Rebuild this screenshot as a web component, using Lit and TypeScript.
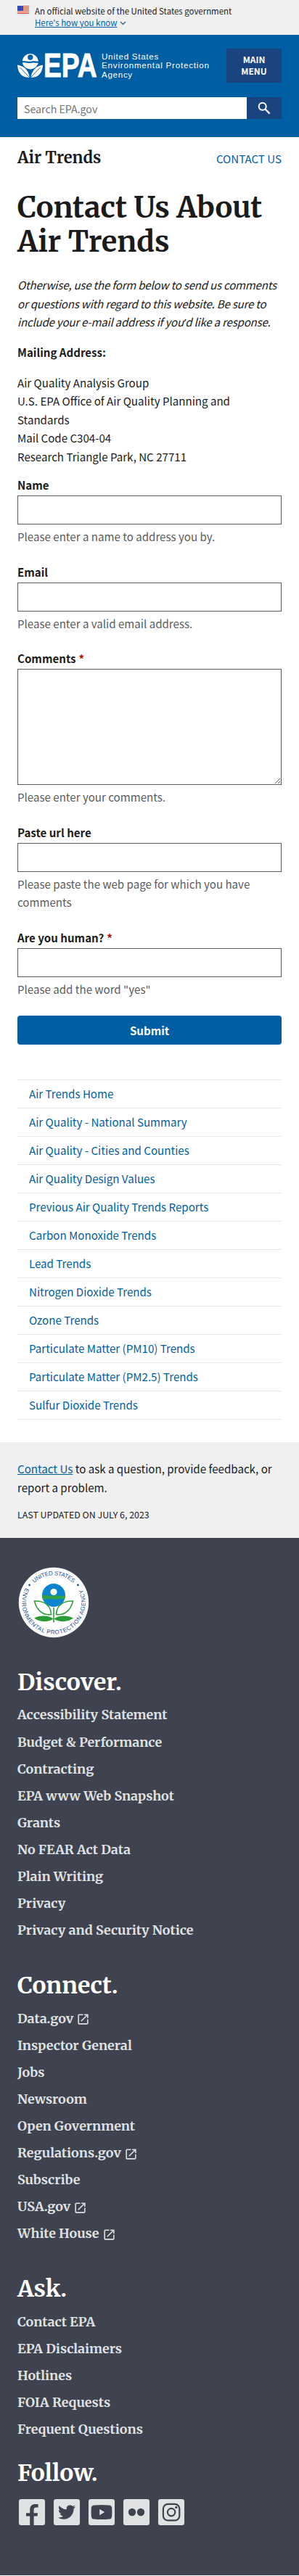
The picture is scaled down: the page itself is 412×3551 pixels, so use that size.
import { LitElement, html, svg, css, nothing } from "lit";
import { customElement } from "lit/decorators.js";

interface Field { id: string; label: string; hint: string; required?: boolean; multiline?: boolean; }
interface FooterLink { text: string; external?: boolean; }

const FIELDS: Field[] = [
  { id: "name", label: "Name", hint: "Please enter a name to address you by." },
  { id: "email", label: "Email", hint: "Please enter a valid email address." },
  { id: "comments", label: "Comments", hint: "Please enter your comments.", required: true, multiline: true },
  { id: "url", label: "Paste url here", hint: "Please paste the web page for which you have comments" },
  { id: "human", label: "Are you human?", hint: 'Please add the word "yes"', required: true },
];

const NAV = [
  "Air Trends Home", "Air Quality - National Summary", "Air Quality - Cities and Counties",
  "Air Quality Design Values", "Previous Air Quality Trends Reports", "Carbon Monoxide Trends",
  "Lead Trends", "Nitrogen Dioxide Trends", "Ozone Trends", "Particulate Matter (PM10) Trends",
  "Particulate Matter (PM2.5) Trends", "Sulfur Dioxide Trends",
];

const DISCOVER: FooterLink[] = [
  "Accessibility Statement", "Budget & Performance", "Contracting", "EPA www Web Snapshot", "Grants",
  "No FEAR Act Data", "Plain Writing", "Privacy", "Privacy and Security Notice",
].map((text) => ({ text }));

const CONNECT: FooterLink[] = [
  { text: "Data.gov", external: true }, { text: "Inspector General" }, { text: "Jobs" }, { text: "Newsroom" },
  { text: "Open Government" }, { text: "Regulations.gov", external: true }, { text: "Subscribe" },
  { text: "USA.gov", external: true }, { text: "White House", external: true },
];

const ASK: FooterLink[] = [
  "Contact EPA", "EPA Disclaimers", "Hotlines", "FOIA Requests", "Frequent Questions",
].map((text) => ({ text }));

const SOCIAL = [
  { name: "Facebook", art: svg`<path fill="#3e434f" d="M15.2 36V23.4H10V19.2H15.2V14.8C15.2 9.6 18 7 22.6 7H26.6V11.4H23.8C21.2 11.4 20.6 12.6 20.6 14.6V19.2H26L25.5 23.4H20.6V36Z"/>` },
  { name: "Twitter", art: svg`<path fill="#3e434f" transform="translate(6 6)" d="M23.953 4.57a10 10 0 01-2.825.775 4.958 4.958 0 002.163-2.723c-.951.555-2.005.959-3.127 1.184a4.92 4.92 0 00-8.384 4.482C7.69 8.095 4.067 6.13 1.64 3.162a4.822 4.822 0 00-.666 2.475c0 1.71.87 3.213 2.188 4.096a4.904 4.904 0 01-2.228-.616v.06a4.923 4.923 0 003.946 4.827 4.996 4.996 0 01-2.212.085 4.936 4.936 0 004.604 3.417 9.867 9.867 0 01-6.102 2.105c-.39 0-.779-.023-1.17-.067a13.995 13.995 0 007.557 2.209c9.053 0 13.998-7.496 13.998-13.985 0-.21 0-.42-.015-.63A9.935 9.935 0 0024 4.59z"/>` },
  { name: "YouTube", art: svg`<path fill="#3e434f" d="M7 8.5Q18 7.4 29 8.5Q31.8 8.8 32.1 11.5Q32.8 18 32.1 24.5Q31.8 27.2 29 27.5Q18 28.6 7 27.5Q4.2 27.2 3.9 24.5Q3.2 18 3.9 11.5Q4.2 8.8 7 8.5Z"/><path fill="#dfe1e2" d="M15.2 13.8 22.2 18 15.2 22.2Z"/>` },
  { name: "Flickr", art: svg`<circle cx="12" cy="18" r="5.2" fill="#3e434f"/><circle cx="24" cy="18" r="5.2" fill="#3e434f"/>` },
  { name: "Instagram", art: svg`<g fill="none" stroke="#3e434f" stroke-width="2.2"><rect x="6.9" y="6.9" width="22.4" height="22.4" rx="6.4"/><circle cx="18.1" cy="18.1" r="5.2"/></g><circle cx="24.8" cy="11.4" r="1.6" fill="#3e434f"/>` },
];

@customElement("us-banner")
class UsBanner extends LitElement {
  static styles = css`
    :host { display: flex; align-items: flex-start; gap: 8px; height: 48px; padding: 7px 24px 0; box-sizing: border-box;
      background: #f0f0f0; color: #1b1b1b; font: 11.45px/16px "Noto Sans CJK SC", "Open Sans", sans-serif; }
    .flag { margin-top: 1px; display: block; }
    .text { margin: 0; white-space: nowrap; }
    .link { color: #005ea2; text-decoration: underline; }
    .chev { margin-left: 4px; vertical-align: 1px; }
  `;
  render() {
    return html`
      <svg class="flag" width="16" height="11" viewBox="0 0 16 11">
        <rect width="16" height="11" fill="#fff"/>
        ${[0, 1, 2, 3, 4, 5].map((i) => svg`<rect y=${i * 2} width="16" height="1" fill="#db3e1f"/>`)}
        <rect width="8" height="7" fill="#1e33b1"/>
        ${[1, 3, 5].map((y) => [1, 3, 5, 6.6].map((x) => svg`<circle cx=${x + 0.2} cy=${y + 0.4} r=".45" fill="#fff"/>`))}
      </svg>
      <p class="text">An official website of the United States government<br>
        <a class="link">Here's how you know</a><svg class="chev" width="9" height="6" viewBox="0 0 9 6"><path d="M1 1 4.5 4.5 8 1" fill="none" stroke="#3f6079" stroke-width="1.4"/></svg>
      </p>`;
  }
}

@customElement("site-header")
class SiteHeader extends LitElement {
  static styles = css`
    :host { display: block; height: 141px; box-sizing: border-box; padding: 19px 24px 0; background: #005ea2;
      font-family: "Noto Sans CJK SC", "Open Sans", sans-serif; }
    .top { display: flex; justify-content: space-between; align-items: flex-start; height: 47px; }
    .logo { display: block; margin-top: -7px; }
    .menu { width: 76px; height: 47px; margin: 0; padding: 0 16px 1px; border: 0; background: #1a4480; color: #fff;
      font: 700 11.9px/16px "Noto Sans CJK SC", "Open Sans", sans-serif; }
    .search { display: flex; margin-top: 20px; height: 30px; }
    .input { flex: 1; min-width: 0; height: 30px; box-sizing: border-box; border: 0; border-radius: 0; margin: 0; padding: 2px 9px 0;
      background: #fff; font: 14.2px/20px "Noto Sans CJK SC", "Open Sans", sans-serif; }
    .input::placeholder { color: #757575; opacity: 1; }
    .go { width: 48px; padding: 0; border: 0; background: #1a4480; display: grid; place-items: center; }
  `;
  render() {
    return html`
      <div class="top">
        <svg class="logo" width="268" height="60" viewBox="24 60 268 60" fill="#fff">
          <path d="M30.6 84.2A11.2 11.2 0 0 1 52.9 84.2C50 85.4 47 83.2 43.8 84.4 40 85.8 35 83.2 30.6 84.2Z"/>
          <circle cx="41.8" cy="79" r="3.7" fill="#005ea2"/>
          <path d="M30.8 86.6C35 85.4 39.5 88 43.6 86.8 47 85.8 50 87.4 52.7 86.6A11.2 11.2 0 0 1 30.8 86.6Z"/>
          <path d="M24 89.4C32.5 90.6 38.8 95.6 40.9 106.7 31 107.4 24.4 101 24 89.4Z"/>
          <path d="M59 89.4C50.5 90.6 44.6 95.6 42.3 106.7 52 107.4 58.6 101 59 89.4Z"/>
          <path d="M27.5 93 41 107M55.5 93 42 107" stroke="#005ea2" stroke-width=".9"/>
          <text transform="translate(60 106.3) scale(.8 1)" stroke="#fff" stroke-width=".9" font-family="Liberation Sans, Arial, sans-serif" font-weight="700" font-size="46.5">EPA</text>
          <g font-family="Liberation Sans, Arial, sans-serif" font-size="11.6">
            <text x="140" y="82" letter-spacing=".72">United States</text>
            <text x="140" y="94.3" letter-spacing=".8">Environmental Protection</text>
            <text x="140" y="106.8" letter-spacing=".7">Agency</text>
          </g>
        </svg>
        <button class="menu">MAIN MENU</button>
      </div>
      <div class="search">
        <input class="input" type="text" placeholder="Search EPA.gov" aria-label="Search">
        <button class="go" aria-label="Search"><svg width="18" height="18" viewBox="0 0 18 18"><g fill="none" stroke="#fff"><circle cx="6.7" cy="6.7" r="5" stroke-width="2"/><path d="M10.5 10.5 16.6 16.6" stroke-width="2.4"/></g></svg></button>
      </div>`;
  }
}

@customElement("form-field")
class FormField extends LitElement {
  static properties = { field: { attribute: false } };
  declare field: Field;
  static styles = css`
    :host { display: block; margin-bottom: 24px; }
    .label { display: block; font-weight: 700; line-height: 22.05px; margin-bottom: 4px; }
    .star { color: #b50909; margin-left: 4px; }
    .control { display: block; box-sizing: border-box; width: 100%; height: 40px; margin: 0; padding: 8px;
      border: 1px solid #565c65; border-radius: 0; background: #fff; font: inherit; line-height: 1.3; }
    .multi { height: 160px; }
    .hint { margin-top: 4px; color: #5c5c5c; }
  `;
  render() {
    const f = this.field;
    return html`
      <label class="label" for=${f.id}>${f.label}${f.required ? html`<span class="star">*</span>` : nothing}</label>
      ${f.multiline
        ? html`<textarea class="control multi" id=${f.id}></textarea>`
        : html`<input class="control" id=${f.id} type="text">`}
      <div class="hint">${f.hint}</div>`;
  }
}

@customElement("epa-seal")
class EpaSeal extends LitElement {
  static styles = css`:host { display: block; } .seal { display: block; }`;
  render() {
    return html`
      <svg class="seal" width="100" height="100" viewBox="-50 -50 100 100">
        <defs>
          <path id="top" d="M-26.7 -26.7A37.8 37.8 0 0 1 26.7 -26.7"/>
          <path id="low" d="M-38.8 -19.8A43.6 43.6 0 1 0 38.8 -19.8"/>
        </defs>
        <circle r="48.2" fill="#fff"/>
        <g fill="#1b4f8f" font-family="Liberation Sans, Arial, sans-serif" font-size="8">
          <text textLength="59"><textPath href="#top">UNITED STATES</textPath></text>
          <text textLength="176"><textPath href="#low">ENVIRONMENTAL PROTECTION AGENCY</textPath></text>
          <circle cx="-33.4" cy="-24" r="1.4"/><circle cx="33.4" cy="-24" r="1.4"/>
        </g>
        <circle cy="-10" r="16" fill="#0a84d0"/>
        <circle cy="-14.5" r="4.6" fill="#fff"/>
        <path d="M-16 -9.6C-10 -10.8 -5 -8.4 0 -9.4 5 -10.4 10 -8.4 16 -9.6L15.2 -4.6C10 -6.4 5 -3.4 0 -4.6 -5 -5.8 -10 -3.6 -15.2 -4.6Z" fill="#2fa043"/>
        <g fill="none" stroke="#2a9c36" stroke-width="1.5">
          <path d="M-26.5 -2C-13 -2.6 -4 4 -3.4 16.5 -16 18.5 -24 9 -26.5 -2Z"/>
          <path d="M26.5 -2C13 -2.6 4 4 3.4 16.5 16 18.5 24 9 26.5 -2Z"/>
        </g>
        <path d="M-27 21.5C-19 17 -6 17.5 -.5 22.5 -8 28 -20 27 -27 21.5ZM27 21.5C19 17 6 17.5 .5 22.5 8 28 20 27 27 21.5Z" fill="#2a9c36"/>
        <path d="M0 7V27.5" stroke="#2a9c36" stroke-width="1.6"/>
      </svg>`;
  }
}

@customElement("footer-links")
class FooterLinks extends LitElement {
  static properties = { heading: {}, links: { attribute: false } };
  declare heading: string;
  declare links: FooterLink[];
  static styles = css`
    :host { display: block; font-family: Merriweather, "DejaVu Serif Condensed", serif; font-weight: 700; }
    .head { margin: 0 0 6.6px; color: #fff; font-size: 31.9px; line-height: 40px; }
    .list { margin: 0; padding: 0; list-style: none; }
    .item { height: 37.1px; font-size: 17.9px; line-height: 37.1px; color: #dfe1e2; white-space: nowrap; }
    .ext { margin-left: 4px; vertical-align: -4.5px; }
  `;
  render() {
    return html`
      <h2 class="head">${this.heading}</h2>
      <ul class="list">${this.links.map((l) => html`<li class="item">${l.text}${l.external
        ? html`<svg class="ext" width="19" height="19" viewBox="0 0 24 24" fill="#dfe1e2"><path d="M19 19H5V5h7V3H5a2 2 0 0 0-2 2v14a2 2 0 0 0 2 2h14c1.1 0 2-.9 2-2v-7h-2v7zM14 3v2h3.59l-9.83 9.83 1.41 1.41L19 6.41V10h2V3h-7z"/></svg>`
        : nothing}</li>`)}</ul>`;
  }
}

@customElement("app-root")
class AppRoot extends LitElement {
  static styles = css`
    :host { display: block; background: #fff; color: #1b1b1b;
      font: 15.1px/25.44px "Noto Sans CJK SC", "Open Sans", sans-serif; }
    .serif { font-family: Merriweather, "DejaVu Serif Condensed", serif; font-weight: 700; }
    .main { padding: 0 24px; }
    .site { display: flex; justify-content: space-between; align-items: baseline; padding-top: 14px; height: 60.3px; }
    .site-name { font-size: 21.9px; line-height: 27px; margin-top: 1px; }
    .link { color: #005ea2; }
    .title { margin: 0 0 23.4px; font-size: 39.8px; line-height: 46.7px; }
    .para { margin: 0 0 16.6px; }
    .intro { font-style: italic; letter-spacing: -.22px; white-space: nowrap; }
    .apos { font-family: "Open Sans", sans-serif; line-height: 1; }
    .addr { margin-bottom: 15.1px; }
    .submit { display: block; width: 100%; height: 40px; margin: 0; padding: 0; border: 0; border-radius: 4px; background: #005ea2;
      color: #fff; font: 700 15.1px/20px "Noto Sans CJK SC", "Open Sans", sans-serif; }
    .nav { margin: 47.5px 0 31px; padding: 0; list-style: none; border-bottom: 1px solid #e6e6e6; }
    .nav-item { box-sizing: border-box; height: 39.04px; padding-left: 16px; border-top: 1px solid #e6e6e6; line-height: 37.6px; color: #005ea2; }
    .meta { height: 131.5px; box-sizing: border-box; padding: 24.3px 24px 0; background: #f0f0f0; }
    .under { color: #005ea2; text-decoration: underline; }
    .ask { margin: 0 0 14.8px; }
    .updated { margin: 0; font-size: 12.4px; line-height: 20px; }
    .footer { background: #3e434f; padding: 39.5px 24px 0; height: 1430.5px; box-sizing: border-box; }
    .disc { margin-top: 39.8px; }
    .sect { margin-top: 37.7px; }
    .follow { margin: 22px 0 0; color: #fff; font-size: 31.9px; line-height: 40px; }
    .social { display: flex; gap: 12px; margin: 16px 0 0 2px; }
    .tile { display: block; }
  `;
  render() {
    return html`
      <us-banner></us-banner>
      <site-header></site-header>
      <main class="main">
        <div class="site"><span class="serif site-name">Air Trends</span><a class="link">CONTACT US</a></div>
        <h1 class="serif title">Contact Us About<br>Air Trends</h1>
        <p class="para intro">Otherwise, use the form below to send us comments<br>or questions with regard to this website. Be sure to<br>include your e-mail address if you<span class="apos">’</span>d like a response.</p>
        <p class="para"><b>Mailing Address:</b></p>
        <p class="para addr">Air Quality Analysis Group<br>U.S. EPA Office of Air Quality Planning and<br>Standards<br>Mail Code C304-04<br>Research Triangle Park, NC 27711</p>
        ${FIELDS.map((f) => html`<form-field .field=${f}></form-field>`)}
        <button class="submit">Submit</button>
        <ul class="nav">${NAV.map((n) => html`<li class="nav-item">${n}</li>`)}</ul>
      </main>
      <section class="meta">
        <p class="ask"><a class="under">Contact Us</a> to ask a question, provide feedback, or<br>report a problem.</p>
        <p class="updated">LAST UPDATED ON JULY 6, 2023</p>
      </section>
      <footer class="footer">
        <epa-seal></epa-seal>
        <footer-links class="disc" heading="Discover." .links=${DISCOVER}></footer-links>
        <footer-links class="sect" heading="Connect." .links=${CONNECT}></footer-links>
        <footer-links class="sect" heading="Ask." .links=${ASK}></footer-links>
        <h2 class="serif follow">Follow.</h2>
        <div class="social">${SOCIAL.map((s) => html`
          <svg class="tile" role="img" aria-label=${s.name} width="36" height="36" viewBox="0 0 36 36"><rect width="36" height="36" rx="3" fill="#dfe1e2"/>${s.art}</svg>`)}
        </div>
      </footer>`;
  }
}
